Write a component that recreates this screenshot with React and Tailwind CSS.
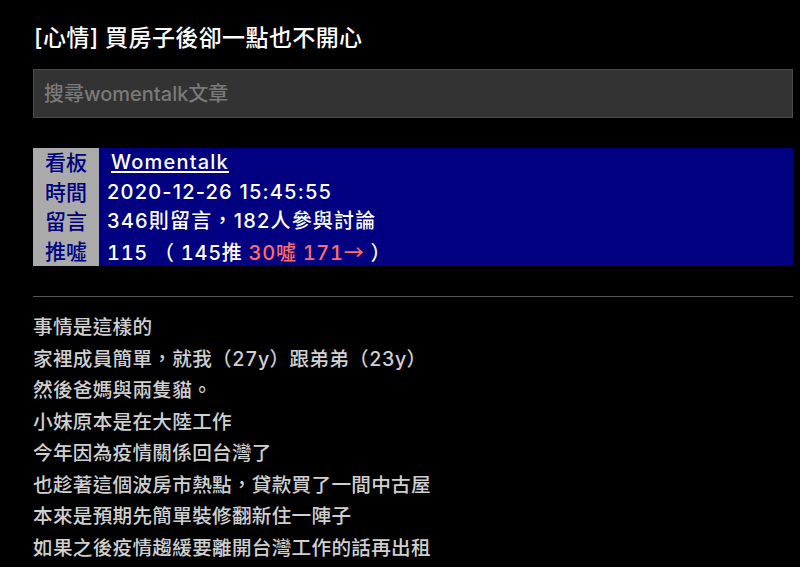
const font = { fontFamily: 'Inter, "Noto Sans CJK TC", sans-serif' };
const cjk = { fontFamily: '"Noto Sans CJK TC", sans-serif' };

const meta = [
  { label: '看板', value: <span className="ml-1 underline underline-offset-2">Womentalk</span> },
  { label: '時間', value: '2020-12-26 15:45:55' },
  { label: '留言', value: '346則留言，182人參與討論' },
  {
    label: '推噓',
    tabular: true,
    value: (
      <>
        115 （ 145推{' '}
        <span className="text-[#ff6b6b]">
          30噓 171<span style={cjk}>→</span>
        </span>{' '}
        ）
      </>
    ),
  },
];

const lines = [
  '事情是這樣的',
  '家裡成員簡單，就我（27y）跟弟弟（23y）',
  '然後爸媽與兩隻貓。',
  '小妹原本是在大陸工作',
  '今年因為疫情關係回台灣了',
  '也趁著這個波房市熱點，貸款買了一間中古屋',
  '本來是預期先簡單裝修翻新住一陣子',
  '如果之後疫情趨緩要離開台灣工作的話再出租',
];

export default function App() {
  return (
    <div className="w-[800px] h-[567px] overflow-hidden bg-black" style={font}>
      <div className="ml-[33px] w-[760px] pt-[22px]">
        <h1 className="text-[23px] leading-[32px] text-white font-medium tracking-[0.4px] pl-px">
          [心情] 買房子後卻一點也不開心
        </h1>

        <div className="mt-[15px] h-[49px] bg-[#333] border border-[#4a4a4a] flex items-center px-[10px]">
          <span className="text-[20px] text-[#7a7a7a] font-medium">搜尋womentalk文章</span>
        </div>

        <div className="mt-[30px] flex flex-col">
          {meta.map((row) => (
            <div key={row.label} className="flex h-[29.5px]">
              <div className="w-[66px] bg-[#aaaaaa] text-[#000080] text-[21px] leading-[29.5px] text-center font-medium">
                {row.label}
              </div>
              <div
                className={
                  row.tabular
                    ? 'flex-1 bg-[#000080] text-white text-[20px] leading-[29.5px] pl-[8px] whitespace-pre font-medium tracking-[0.7px] tabular-nums'
                    : 'flex-1 bg-[#000080] text-white text-[20px] leading-[29.5px] pl-[8px] whitespace-pre font-medium tracking-[1.2px]'
                }
              >
                {row.value}
              </div>
            </div>
          ))}
        </div>

        <div className="mt-[30px] border-t border-[#555]" />

        <div className="mt-[15px] text-[19.6px] leading-[31.5px] text-[#d0d0d0] font-medium tracking-[0.3px] tabular-nums">
          {lines.map((l) => (
            <p key={l}>{l}</p>
          ))}
        </div>
      </div>
    </div>
  );
}
